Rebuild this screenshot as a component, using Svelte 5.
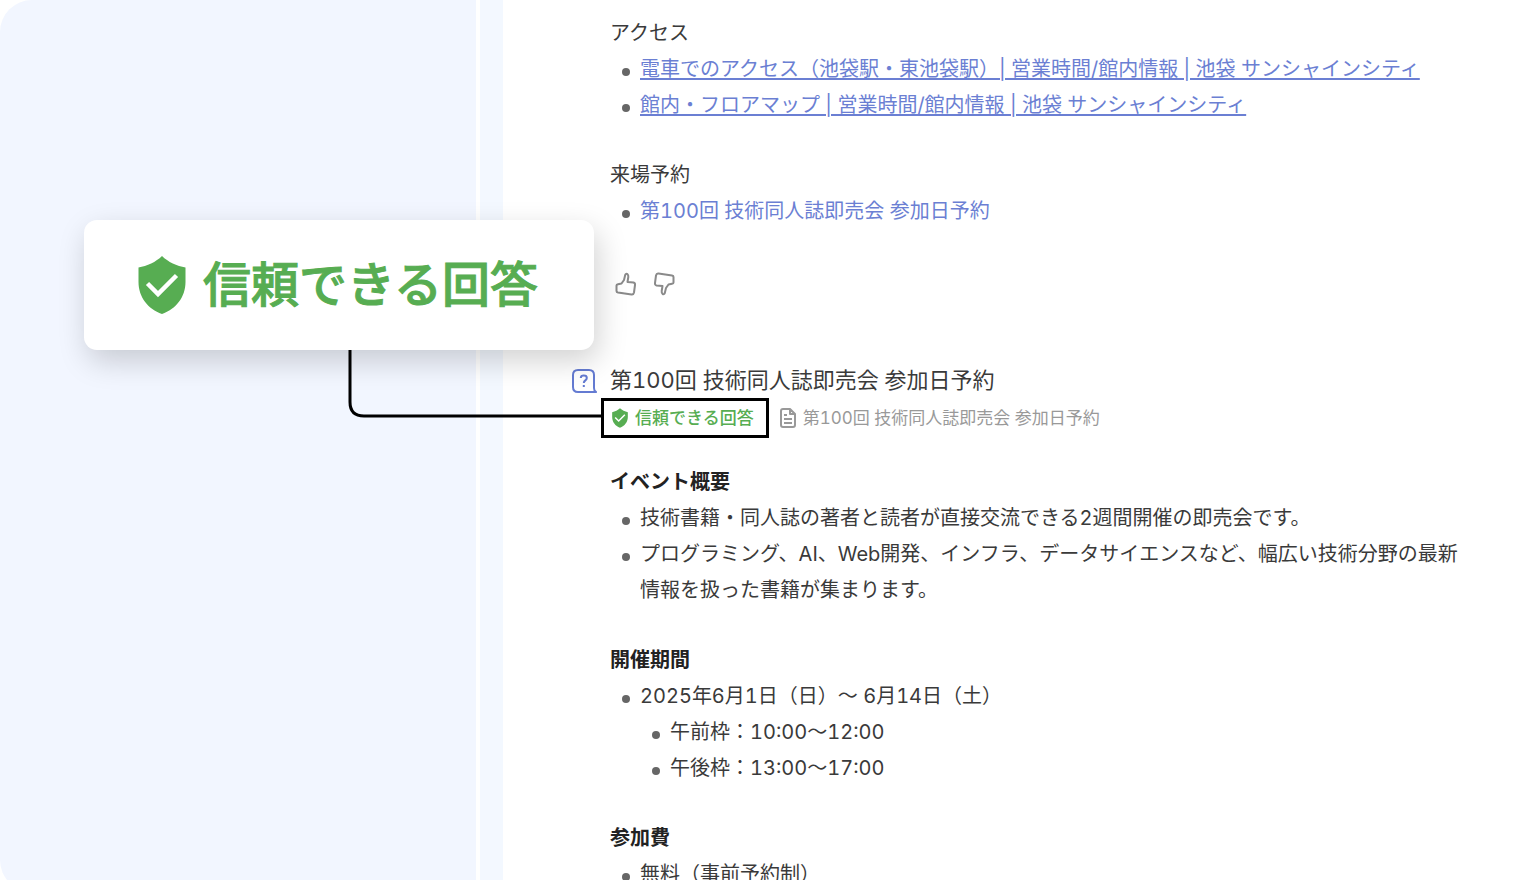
<script>
  const links = [
    '電車でのアクセス（池袋駅・東池袋駅）| 営業時間/館内情報 | 池袋 サンシャインシティ',
    '館内・フロアマップ | 営業時間/館内情報 | 池袋 サンシャインシティ'
  ];

  const eventTitle = '第100回 技術同人誌即売会 参加日予約';

  const sections = [
    {
      heading: 'イベント概要',
      items: [
        { text: '技術書籍・同人誌の著者と読者が直接交流できる2週間開催の即売会です。' },
        { text: 'プログラミング、AI、Web開発、インフラ、データサイエンスなど、幅広い技術分野の最新情報を扱った書籍が集まります。' }
      ]
    },
    {
      heading: '開催期間',
      items: [
        {
          text: '2025年6月1日（日）〜 6月14日（土）',
          children: ['午前枠：10:00〜12:00', '午後枠：13:00〜17:00']
        }
      ]
    },
    {
      heading: '参加費',
      items: [{ text: '無料（事前予約制）' }]
    }
  ];
</script>

{#snippet shield()}
  <svg class="shield" viewBox="0 0 48 58" aria-hidden="true">
    <path d="M24 0C18 6 9 10 .5 11.500V26C.5 41 10 53 24 58C38 53 47.500 41 47.500 26V11.500C39 10 30 6 24 0Z" fill="currentColor" />
    <path d="M9.500 27.500L20 38L38.500 19.500" fill="none" stroke="#fff" stroke-width="4.500" />
  </svg>
{/snippet}

{#snippet thumb()}
  <path d="M2.500 13.500Q2.500 12.500 4 12.200L7.500 11.500L10 8L11.200 3Q12 1.200 13.500 2.200Q14.500 3 14.300 5L13.500 10L19.500 10.500Q21.300 11 21 13L20 20.500Q19.500 22.800 17.500 22.500L4 20.500Q2.500 20.200 2.500 19Z" />
{/snippet}

<div class="page">
  <aside class="sidebar"></aside>
  <div class="rail"></div>

  <main class="content">
    <section>
      <h3 class="plain">アクセス</h3>
      <ul>
        {#each links as link}
          <li><a class="underlined" href="#access">{link}</a></li>
        {/each}
      </ul>
    </section>

    <section>
      <h3 class="plain">来場予約</h3>
      <ul>
        <li><a href="#reserve">{eventTitle}</a></li>
      </ul>
    </section>

    <div class="feedback">
      <button aria-label="良い回答">
        <svg viewBox="0 0 24 24">{@render thumb()}</svg>
      </button>
      <button aria-label="悪い回答">
        <svg class="down" viewBox="0 0 24 24">{@render thumb()}</svg>
      </button>
    </div>

    <header class="question">
      <svg viewBox="0 0 26 26" aria-hidden="true">
        <path d="M7 2H18Q23 2 23 7V20Q23 23 25 24H7Q2 24 2 19V7Q2 2 7 2Z" />
        <path d="M9.800 10C9.800 6.800 15.800 6.800 15.800 10C15.800 12.500 12.800 12.300 12.800 15M12.800 17V19" />
      </svg>
      <h2>{eventTitle}</h2>
    </header>

    <div class="meta">
      <span class="badge">{@render shield()}信頼できる回答</span>
      <a class="source" href="#source">
        <svg viewBox="0 0 16 20" aria-hidden="true">
          <path d="M3 1H10L15 6V17Q15 19 13 19H3Q1 19 1 17V3Q1 1 3 1ZM10 1V6H15M4 7H7M4 11H12M4 15H12" />
        </svg>
        {eventTitle}
      </a>
    </div>

    {#each sections as section}
      <section>
        <h3>{section.heading}</h3>
        <ul>
          {#each section.items as item}
            <li>
              {item.text}
              {#if item.children}
                <ul>
                  {#each item.children as child}
                    <li>{child}</li>
                  {/each}
                </ul>
              {/if}
            </li>
          {/each}
        </ul>
      </section>
    {/each}
  </main>

  <!-- callout enlarging the badge, laid over the answer -->
  <svg class="connector" viewBox="0 0 256 70" aria-hidden="true">
    <path d="M2 0V54Q2 68 16 68H256" />
  </svg>
  <div class="callout">{@render shield()}信頼できる回答</div>
</div>

<style>
  :global(body) {
    margin: 0;
    background: #fff;
  }

  .page {
    position: relative;
    display: grid;
    grid-template-columns: 476px 23px minmax(0, 1fr);
    column-gap: 4px;
    height: 100vh;
    overflow: hidden;
    color: #3a3a3a;
    font-family: Inter, "Noto Sans CJK JP", sans-serif;
    font-size: 20px;
    font-variant-numeric: tabular-nums;
    line-height: 36px;
  }

  .sidebar {
    background: #f2f6ff;
    border-radius: 32px 0 0 32px;
  }

  .rail {
    background: #f3f8ff;
  }

  .content {
    padding: 16px 48px 0 107px;
  }

  section + section {
    margin-top: 35px;
  }

  h2,
  h3 {
    margin: 0;
    line-height: 35px;
  }

  h2 {
    font-size: 22px;
    font-weight: 400;
  }

  h3 {
    font-size: 20px;
    font-weight: 700;
    color: #222;
  }

  h3.plain {
    font-weight: 400;
    color: #3a3a3a;
  }

  ul {
    margin: 0;
    padding: 0;
    list-style: none;
  }

  li {
    position: relative;
    padding-left: 30px;
  }

  li::before {
    content: "";
    position: absolute;
    left: 12px;
    top: 17px;
    width: 8px;
    height: 8px;
    border-radius: 50%;
    background: #666;
  }

  a {
    color: #6b7fd3;
    text-decoration: none;
  }

  a.underlined {
    text-decoration: underline;
    text-decoration-thickness: 2px;
    text-underline-offset: 2px;
  }

  .content {
    padding-left: 103px;
  }

  .feedback {
    display: flex;
    gap: 14px;
    margin: 43px 0 67px 4px;
  }

  .feedback button {
    width: 24px;
    height: 24px;
    padding: 0;
    border: 0;
    background: none;
  }

  .feedback svg {
    display: block;
    fill: none;
    stroke: #8a8a8a;
    stroke-width: 2;
    stroke-linejoin: round;
  }

  .feedback .down {
    transform: rotate(180deg);
  }

  .question {
    display: flex;
    align-items: center;
    gap: 13px;
    margin-left: -39px;
  }

  .question svg {
    width: 26px;
    height: 26px;
    fill: none;
    stroke: #647bd2;
    stroke-width: 2;
    stroke-linejoin: round;
  }

  .meta {
    display: flex;
    align-items: center;
    gap: 11px;
    margin: 0 0 27px -9px;
    font-size: 17px;
  }

  .badge {
    display: flex;
    align-items: center;
    gap: 7px;
    box-sizing: border-box;
    height: 40px;
    padding: 0 12px 0 8px;
    border: 3px solid #000;
    color: #57ad52;
    font-weight: 500;
  }

  .badge :global(.shield) {
    width: 16px;
    height: 20px;
  }

  .source {
    display: flex;
    align-items: center;
    gap: 7px;
    color: #999;
  }

  .source svg {
    width: 16px;
    height: 20px;
    fill: none;
    stroke: #999;
    stroke-width: 2;
    stroke-linejoin: round;
  }

  .callout {
    position: absolute;
    left: 84px;
    top: 220px;
    display: flex;
    align-items: center;
    justify-content: center;
    gap: 17px;
    box-sizing: border-box;
    width: 510px;
    height: 130px;
    padding-right: 2px;
    border-radius: 13px;
    background: #fff;
    box-shadow: 4px 11px 30px rgba(0, 0, 0, 0.18);
    color: #57ad52;
    font-size: 48px;
    font-weight: 500;
    -webkit-text-stroke: 1px #57ad52;
  }

  .callout :global(.shield) {
    width: 48px;
    height: 58px;
  }

  .connector {
    position: absolute;
    left: 348px;
    top: 348px;
    width: 256px;
    height: 70px;
    fill: none;
    stroke: #000;
    stroke-width: 3;
  }
</style>
